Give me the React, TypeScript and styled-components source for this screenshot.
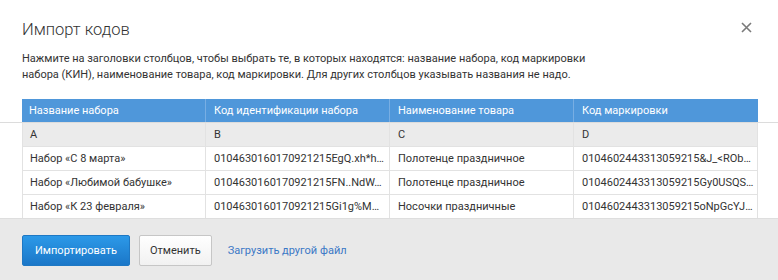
import React from 'react'
import styled, { createGlobalStyle } from 'styled-components'

const GlobalStyle = createGlobalStyle`
  html, body {
    margin: 0;
    padding: 0;
    background: #ffffff;
  }
  body {
    font-family: Roboto, 'Liberation Sans', Arial, sans-serif;
    color: #333333;
  }
`

const Modal = styled.div`
  width: 778px;
  height: 280px;
  display: flex;
  flex-direction: column;
  background: #ffffff;
  overflow: hidden;
`

const Head = styled.div`
  display: flex;
  justify-content: space-between;
  align-items: flex-start;
  padding: 16px 24px 0 22px;
`

const Title = styled.h1`
  margin: 0;
  font-size: 16.5px;
  line-height: 28px;
  font-weight: 300;
  color: #333333;
`

const CloseButton = styled.button`
  border: 0;
  background: none;
  padding: 0;
  margin-top: 3px;
  width: 16px;
  height: 16px;
  display: flex;
  align-items: center;
  justify-content: center;
  cursor: pointer;
  color: #7a7a7a;
`

const Description = styled.p`
  margin: 7px 22px 0;
  font-size: 11px;
  line-height: 16px;
  color: #333333;
  max-width: 580px;
`

const TableArea = styled.div`
  margin-top: 16px;
  height: 119px;
  overflow: hidden;
`

const HeadBand = styled.div`
  padding: 0 20px 0 22px;
  border-bottom: 1px solid #dcdcdc;
`

const Rows = styled.div`
  padding: 0 20px 0 22px;
`

const Row = styled.div<{ $variant: 'head' | 'letters' | 'data' }>`
  display: grid;
  grid-template-columns: 183px 184px 184px 185px;
  height: ${(p) => (p.$variant === 'head' ? '23px' : '24px')};
  background: ${(p) =>
    p.$variant === 'head' ? '#4f97da' : p.$variant === 'letters' ? '#ebebeb' : '#ffffff'};
  color: ${(p) => (p.$variant === 'head' ? '#ffffff' : '#333333')};
  border-bottom: ${(p) => (p.$variant === 'head' ? '0' : '1px solid #e2e2e2')};
  box-sizing: border-box;
`

const Cell = styled.div<{ $head?: boolean }>`
  padding: 0 2px 0 8px;
  font-size: 11px;
  line-height: 23px;
  white-space: nowrap;
  overflow: hidden;
  text-overflow: ellipsis;
  border-left: 1px solid ${(p) => (p.$head ? '#78aee3' : '#e2e2e2')};
  &:first-child {
    border-left: ${(p) => (p.$head ? '0' : '1px solid #e2e2e2')};
    padding-left: 7px;
  }
  &:last-child {
    border-right: ${(p) => (p.$head ? '0' : '1px solid #e2e2e2')};
  }
`

const Footer = styled.div`
  flex: 1;
  display: flex;
  align-items: flex-start;
  gap: 9px;
  padding: 16px 22px 0;
  background: #e9e9e9;
  border-top: 1px solid #dedede;
`

const Button = styled.button<{ $primary?: boolean }>`
  height: 31px;
  padding: 0 ${(p) => (p.$primary ? '12px' : '10px')};
  font-family: inherit;
  font-size: 11px;
  border-radius: 2px;
  cursor: pointer;
  color: ${(p) => (p.$primary ? '#ffffff' : '#333333')};
  border: 1px solid ${(p) => (p.$primary ? '#1e78c4' : '#c6c6c6')};
  background: ${(p) =>
    p.$primary
      ? 'linear-gradient(#2c99e8, #1b77c8)'
      : 'linear-gradient(#ffffff, #f1f1f1)'};
`

const Link = styled.a`
  margin-left: 7px;
  font-size: 11px;
  line-height: 31px;
  color: #3b78c6;
  text-decoration: none;
  cursor: pointer;
`

const headers = ['Название набора', 'Код идентификации набора', 'Наименование товара', 'Код маркировки']
const letters = ['A', 'B', 'C', 'D']
const data = [
  ['Набор «С 8 марта»', '0104630160170921215EgQ.xh*h…', 'Полотенце праздничное', '0104602443313059215&J_<ROb…'],
  ['Набор «Любимой бабушке»', '0104630160170921215FN..NdW…', 'Полотенце праздничное', '0104602443313059215Gy0USQS…'],
  ['Набор «К 23 февраля»', '0104630160170921215Gi1g%M…', 'Носочки праздничные', '0104602443313059215oNpGcYJ…'],
]

const App = () => (
  <Modal>
    <GlobalStyle />
    <Head>
      <Title>Импорт кодов</Title>
      <CloseButton aria-label="Закрыть">
        <svg width="11" height="11" viewBox="0 0 11 11">
          <path d="M1 1L10 10M10 1L1 10" stroke="currentColor" strokeWidth="1.6" />
        </svg>
      </CloseButton>
    </Head>
    <Description>
      Нажмите на заголовки столбцов, чтобы выбрать те, в которых находятся: название набора, код маркировки
      набора (КИН), наименование товара, код маркировки. Для других столбцов указывать названия не надо.
    </Description>
    <TableArea>
      <HeadBand>
        <Row $variant="head">
          {headers.map((h) => (
            <Cell $head key={h}>{h}</Cell>
          ))}
        </Row>
      </HeadBand>
      <Rows>
        <Row $variant="letters">
          {letters.map((l) => (
            <Cell key={l}>{l}</Cell>
          ))}
        </Row>
        {data.map((r, i) => (
          <Row $variant="data" key={i}>
            {r.map((c, j) => (
              <Cell key={j}>{c}</Cell>
            ))}
          </Row>
        ))}
      </Rows>
    </TableArea>
    <Footer>
      <Button $primary>Импортировать</Button>
      <Button>Отменить</Button>
      <Link>Загрузить другой файл</Link>
    </Footer>
  </Modal>
)

export default App
